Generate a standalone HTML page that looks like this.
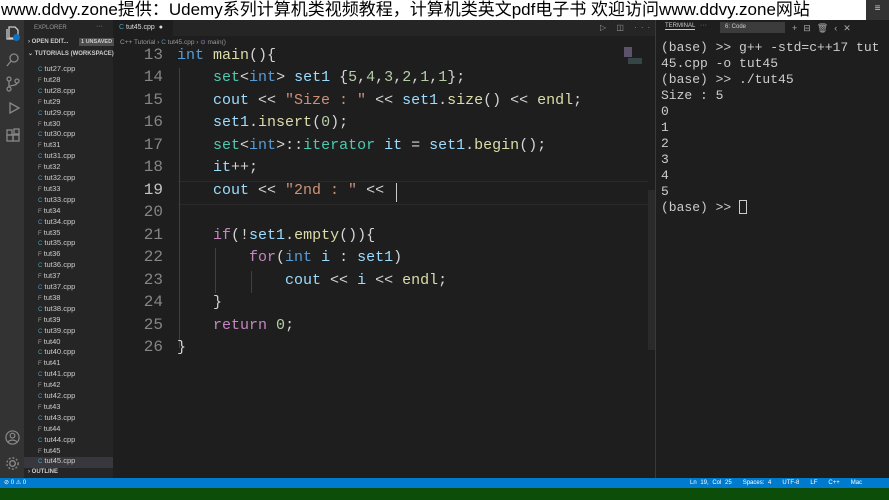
<!DOCTYPE html><html><head><meta charset="utf-8"><style>
*{margin:0;padding:0;box-sizing:border-box}
body{width:889px;height:500px;overflow:hidden;background:#1e1e1e;font-family:"Liberation Sans",sans-serif;position:relative}
.a{position:absolute}
.ban{left:0;top:0;width:866px;height:20px;background:#fff;color:#000;font:17px/20px "Liberation Sans","Noto Sans CJK SC",sans-serif;white-space:nowrap;overflow:hidden;padding-left:1px}
.act{left:0;top:20px;width:24px;height:458px;background:#333}
.side{left:24px;top:20px;width:89px;height:458px;background:#252526;color:#ccc;font-size:7px}
.side div{position:absolute;white-space:nowrap}
.code{font-family:"Liberation Mono",monospace;font-size:15px;color:#d4d4d4;white-space:pre}
.ln{position:absolute;left:113px;width:50px;text-align:right;color:#858585;font-size:16px}
.cl{position:absolute;left:177px}
.k{color:#569cd6}.t{color:#4ec9b0}.s{color:#ce9178}.n{color:#b5cea8}.c{color:#c586c0}.fn{color:#dcdcaa}.v{color:#9cdcfe}
.term{font-family:"Liberation Mono",monospace;font-size:13px;line-height:16px;color:#ccc;white-space:pre}
</style></head><body>
<div class="a act">
<svg class="a" style="left:5px;top:4px" width="16" height="16" viewBox="0 0 16 16" fill="none" stroke="#ccc" stroke-width="1.3"><path d="M4 3h6l3 3v8H4z M2 5v10h8"/></svg>
<div class="a" style="left:13px;top:14px;width:7px;height:7px;border-radius:50%;background:#0e70c0"></div>
<svg class="a" style="left:5px;top:32px" width="16" height="16" viewBox="0 0 16 16" fill="none" stroke="#888" stroke-width="1.3"><circle cx="9" cy="6" r="4"/><path d="M6 9l-4 5"/></svg>
<svg class="a" style="left:5px;top:56px" width="16" height="16" viewBox="0 0 16 16" fill="none" stroke="#888" stroke-width="1.3"><circle cx="4" cy="3" r="2"/><circle cx="4" cy="13" r="2"/><circle cx="12" cy="5" r="2"/><path d="M4 5v6M12 7c0 3-8 2-8 4"/></svg>
<svg class="a" style="left:5px;top:80px" width="16" height="16" viewBox="0 0 16 16" fill="none" stroke="#888" stroke-width="1.3"><path d="M5 3l9 5-9 5z"/></svg>
<svg class="a" style="left:5px;top:108px" width="16" height="16" viewBox="0 0 16 16" fill="none" stroke="#888" stroke-width="1.3"><rect x="2" y="7" width="6" height="6"/><rect x="8" y="7" width="6" height="6"/><rect x="9" y="1" width="5" height="5"/><rect x="2" y="2" width="5" height="5"/></svg>
<svg class="a" style="left:5px;top:410px" width="15" height="15" viewBox="0 0 16 16" fill="none" stroke="#888" stroke-width="1.3"><circle cx="8" cy="8" r="7"/><circle cx="8" cy="6" r="2.5"/><path d="M3 13c2-3 8-3 10 0"/></svg>
<svg class="a" style="left:5px;top:436px" width="15" height="15" viewBox="0 0 16 16" fill="none" stroke="#888" stroke-width="1.5"><circle cx="8" cy="8" r="3"/><circle cx="8" cy="8" r="6" stroke-dasharray="2 2"/></svg>
</div>
<div class="a side">
<div style="left:10px;top:5px;color:#999;font-size:6px">EXPLORER</div><div style="left:72px;top:3px;color:#999">···</div>
<div style="left:4px;top:19px;font-weight:bold;font-size:6px">› OPEN EDIT...</div>
<div style="left:55px;top:18px;background:#4d4d4d;padding:1px 2px;font-size:5.5px;font-weight:bold">1 UNSAVED</div>
<div style="left:4px;top:30px;font-weight:bold;font-size:6px">⌄ TUTORIALS (WORKSPACE)</div>
<div style="left:0;top:437px;width:89px;height:11px;background:#37373d"></div>
<div style="left:4px;top:449px;font-weight:bold;font-size:6px">› OUTLINE</div>
</div>
<div class="a" id="files" style="left:38px;top:64px;font-size:7.5px;color:#ccc"></div>
<div class="a" style="left:113px;top:20px;width:542px;height:16px;background:#252526"></div>
<div class="a" style="left:113px;top:20px;width:60px;height:16px;background:#1e1e1e;color:#ddd;font-size:7px;line-height:16px;padding-left:6px"><span style="color:#519aba">C</span> tut45.cpp &nbsp;●</div>
<div class="a" style="left:600px;top:20px;color:#999;font-size:8px;line-height:16px;letter-spacing:4px">▷ ◫ ···</div>
<div class="a" style="left:120px;top:38px;color:#999;font-size:6.5px">C++ Tutorial › <span style="color:#519aba">C</span> tut45.cpp › <span style="color:#b180d7">⊙</span> main()</div>
<div class="a" style="left:178px;top:181px;width:470px;height:24px;border-top:1px solid #2a2a2a;border-bottom:1px solid #2a2a2a"></div>
<div class="a" style="left:179px;top:68px;width:1px;height:280px;background:#404040"></div>
<div class="a" style="left:215px;top:248px;width:1px;height:45px;background:#404040"></div>
<div class="a" style="left:251px;top:271px;width:1px;height:22px;background:#404040"></div>
<div class="code" id="code"></div>
<div class="a" style="left:396px;top:183px;width:1px;height:19px;background:#ccc"></div>
<div class="a" style="left:624px;top:47px;width:8px;height:10px;background:#6d5f80;opacity:.8"></div>
<div class="a" style="left:628px;top:58px;width:14px;height:6px;background:#3c5050;opacity:.8"></div>
<div class="a" style="left:648px;top:190px;width:7px;height:160px;background:#2a2a2a"></div>
<div class="a" style="left:655px;top:20px;width:1px;height:458px;background:#3a3a3a"></div>
<div class="a" style="left:656px;top:20px;width:233px;height:16px;background:#1e1e1e"></div>
<div class="a" style="left:665px;top:23px;color:#ccc;font-size:6px;border-bottom:1px solid #ccc">TERMINAL</div>
<div class="a" style="left:700px;top:22px;color:#888;font-size:7px">···</div>
<div class="a" style="left:720px;top:22px;width:65px;height:11px;background:#3c3c3c;color:#ccc;font-size:6px;line-height:11px;padding-left:5px">6: Code</div>
<div class="a" style="left:792px;top:20px;color:#aaa;font-size:9px;line-height:16px;letter-spacing:6px">+⊟🗑‹✕</div>
<div class="a" style="left:866px;top:0;width:23px;height:20px;background:#333;color:#ccc;font-size:10px;text-align:center;line-height:18px">≡</div>
<div class="a term" style="left:661px;top:40px">(base) >> g++ -std=c++17 tut
45.cpp -o tut45
(base) >> ./tut45
Size : 5
0
1
2
3
4
5
(base) >> <span style="display:inline-block;width:8px;height:14px;border:1px solid #ccc;vertical-align:-3px"></span></div>
<div class="a" style="left:0;top:478px;width:889px;height:10px;background:#007acc;color:#fff;font-size:6px;line-height:10px">
<span class="a" style="left:4px">⊘ 0 ⚠ 0</span>
<span class="a" style="left:690px;white-space:nowrap;word-spacing:2px">Ln 19, Col 25 &nbsp; Spaces: 4 &nbsp; UTF-8 &nbsp; LF &nbsp; C++ &nbsp; Mac</span></div>
<div class="a" style="left:0;top:488px;width:889px;height:12px;background:#0d4d0a"></div>
<script>
var f=['C:tut27.cpp'];for(var i=28;i<=45;i++){f.push('F:tut'+i);f.push('C:tut'+i+'.cpp');}
var h='';f.forEach(function(x,j){var c=x[0]=='C';h+='<div style="position:absolute;left:0;top:'+(j*10.9)+'px;white-space:nowrap"><span style="color:'+(c?'#519aba':'#999')+';font-size:6px">'+(c?'C':'F')+'</span> '+x.slice(2)+'</div>';});
document.getElementById('files').innerHTML=h;
var L=[
'<span class="k">int</span> <span class="fn">main</span>(){',
'    <span class="t">set</span>&lt;<span class="k">int</span>&gt; <span class="v">set1</span> {<span class="n">5</span>,<span class="n">4</span>,<span class="n">3</span>,<span class="n">2</span>,<span class="n">1</span>,<span class="n">1</span>};',
'    <span class="v">cout</span> &lt;&lt; <span class="s">"Size : "</span> &lt;&lt; <span class="v">set1</span>.<span class="fn">size</span>() &lt;&lt; <span class="fn">endl</span>;',
'    <span class="v">set1</span>.<span class="fn">insert</span>(<span class="n">0</span>);',
'    <span class="t">set</span>&lt;<span class="k">int</span>&gt;::<span class="t">iterator</span> <span class="v">it</span> = <span class="v">set1</span>.<span class="fn">begin</span>();',
'    <span class="v">it</span>++;',
'    <span class="v">cout</span> &lt;&lt; <span class="s">"2nd : "</span> &lt;&lt; ',
'',
'    <span class="c">if</span>(!<span class="v">set1</span>.<span class="fn">empty</span>()){',
'        <span class="c">for</span>(<span class="k">int</span> <span class="v">i</span> : <span class="v">set1</span>)',
'            <span class="v">cout</span> &lt;&lt; <span class="v">i</span> &lt;&lt; <span class="fn">endl</span>;',
'    }',
'    <span class="c">return</span> <span class="n">0</span>;',
'}'];
var o='';L.forEach(function(x,j){var y=47+j*22.46;o+='<div class="ln" style="top:'+(y-1)+'px;'+(j==6?'color:#c6c6c6':'')+'">'+(13+j)+'</div><div class="cl" style="top:'+y+'px">'+x+'</div>';});
document.getElementById('code').innerHTML=o;
</script>
<div class="a ban">www.ddvy.zone提供：Udemy系列计算机类视频教程，计算机类英文pdf电子书 欢迎访问www.ddvy.zone网站</div>
</body></html>
